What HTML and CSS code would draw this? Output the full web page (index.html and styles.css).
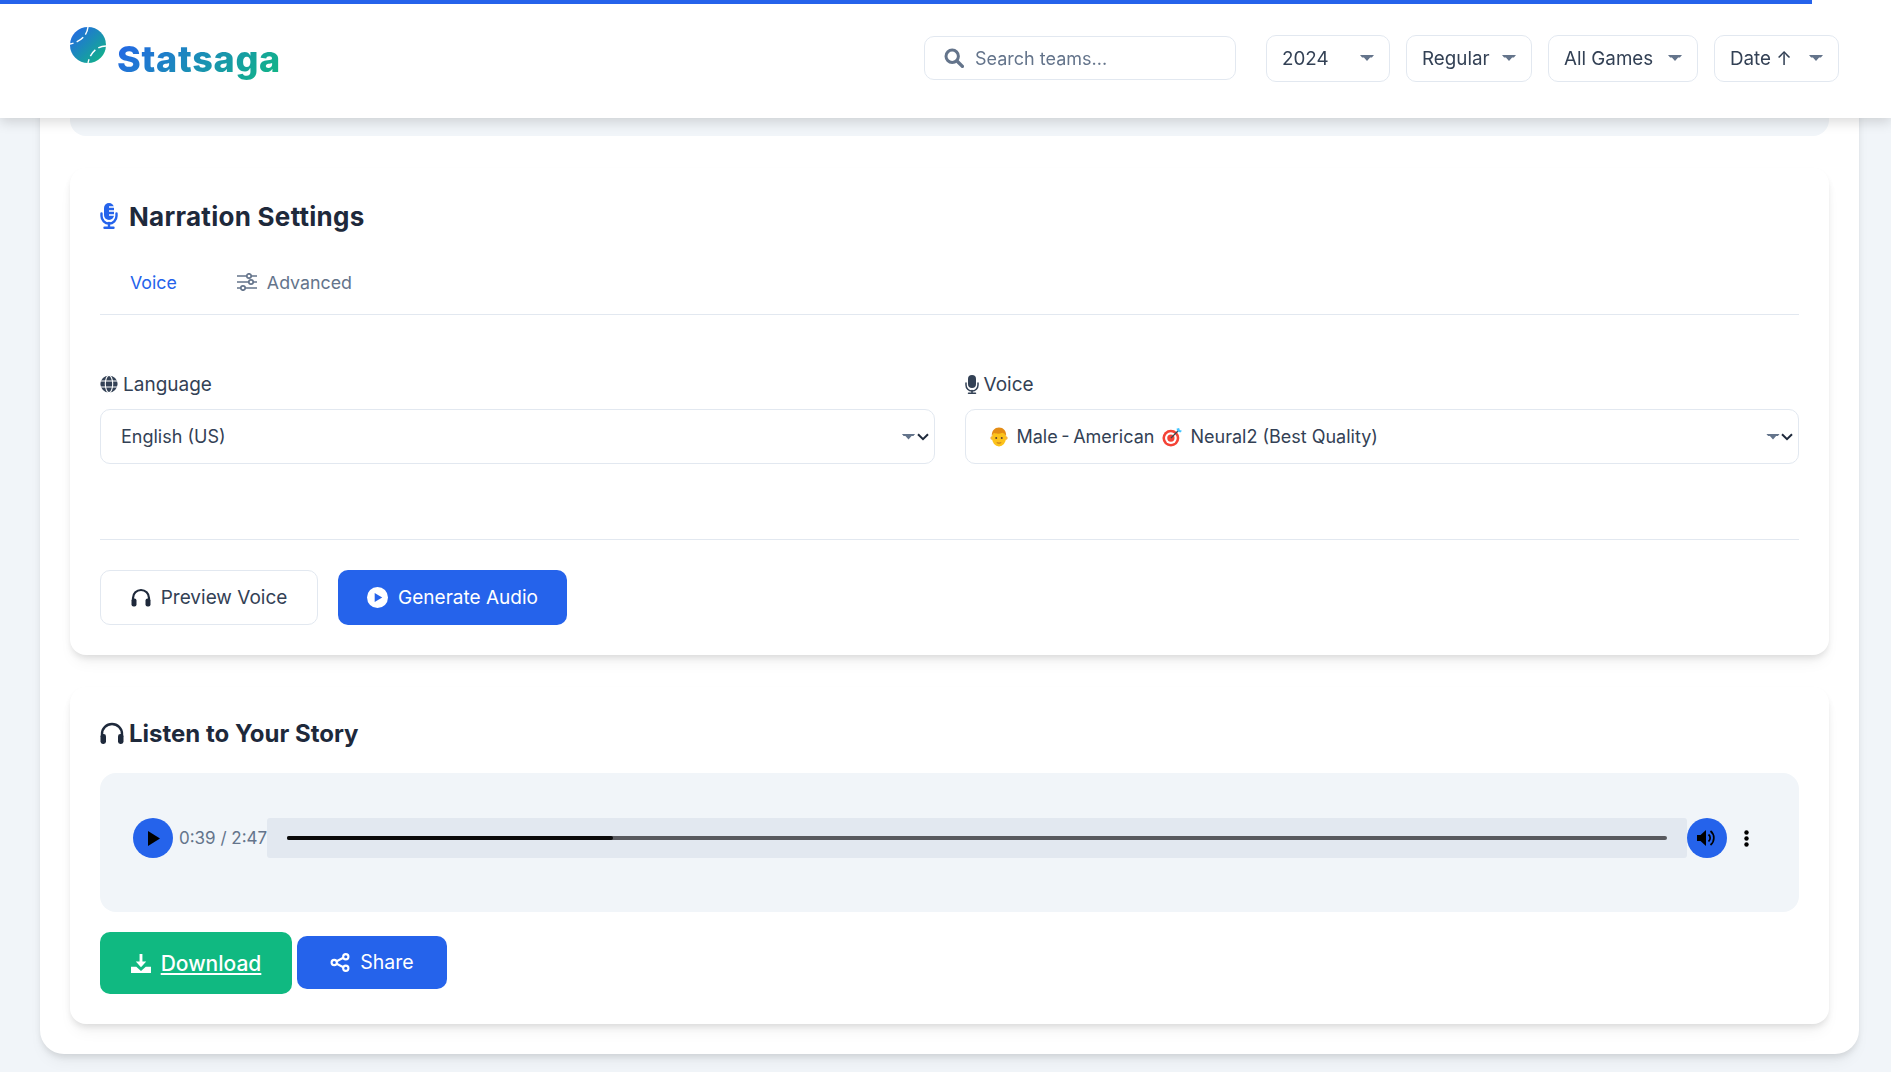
FILE: index.html
```html
<!DOCTYPE html>
<html lang="en">
<head>
    <meta charset="UTF-8">
    <meta name="viewport" content="width=device-width, initial-scale=1.0">
    <title>Statsaga</title>
    <link rel="stylesheet" href="styles.css">
</head>
<body>

<header class="site-header">
    <div class="progress-bar" style="width: 95.8%"></div>
    <div class="header-row">
        <a class="logo">
            <svg class="logo-icon" viewBox="0 0 36 36">
                <defs>
                    <linearGradient id="logo-grad" x1="0" y1="0" x2="1" y2="1">
                        <stop offset="0" stop-color="#2563eb"/>
                        <stop offset="1" stop-color="#10b981"/>
                    </linearGradient>
                </defs>
                <circle cx="18" cy="18" r="18" fill="url(#logo-grad)"/>
                <path d="M18 0C17 9 10 15 0 17" fill="none" stroke="#fff" stroke-width="1.4" stroke-dasharray="8 3.5"/>
                <path d="M36 19C27 19 20 26 18 36" fill="none" stroke="#fff" stroke-width="1.4" stroke-dasharray="8 3.5"/>
            </svg>
            <span class="logo-text">Statsaga</span>
        </a>
        <div class="header-controls">
            <div class="search-box">
                <svg class="search-icon" viewBox="0 0 20 20"><circle cx="8.2" cy="8.2" r="6.2" fill="none" stroke="#64748b" stroke-width="3"/><path d="M13 13l5.4 5.4" stroke="#64748b" stroke-width="3.4" stroke-linecap="round"/></svg>
                <span>Search teams...</span>
            </div>
            <div class="filter filter-year"><span>2024</span><i class="caret"></i></div>
            <div class="filter filter-type"><span>Regular</span><i class="caret"></i></div>
            <div class="filter filter-games"><span>All Games</span><i class="caret"></i></div>
            <div class="filter filter-sort"><span>Date ↑</span><i class="caret"></i></div>
        </div>
    </div>
</header>

<main class="container">
    <section class="card summary-card"></section>

    <section class="card">
        <h2 class="card-title">
            <svg class="title-mic" viewBox="0 0 18 26">
                <rect x="4" y="0" width="10" height="17" rx="5" fill="#2563eb"/>
                <path d="M9 4h5M9 8h5M9 12h5" stroke="#fff" stroke-width="1.5"/>
                <path d="M1.5 10.5v2.5a7.5 7.5 0 0 0 15 0v-2.5" fill="none" stroke="#2563eb" stroke-width="2.4" stroke-linecap="round"/>
                <path d="M9 20v4.5M4.5 24.7h9" stroke="#2563eb" stroke-width="2.4" stroke-linecap="round"/>
            </svg>
            Narration Settings
        </h2>

        <div class="tabs">
            <span class="tab tab-active">Voice</span>
            <span class="tab">
                <svg class="tab-icon" viewBox="0 0 20 18" fill="none" stroke="#64748b" stroke-width="1.7">
                    <path d="M0 3h20M0 9h20M0 15h20"/>
                    <circle cx="12" cy="3" r="2.2" fill="#fff"/>
                    <circle cx="14" cy="9" r="2.2" fill="#fff"/>
                    <circle cx="6" cy="15" r="2.2" fill="#fff"/>
                </svg>
                Advanced
            </span>
        </div>

        <div class="form-grid">
            <div class="form-group">
                <label class="form-label">
                    <svg class="label-icon" viewBox="0 0 18 18">
                        <circle cx="9" cy="9" r="8.6" fill="#334155"/>
                        <g fill="none" stroke="#fff" stroke-width="1.1">
                            <ellipse cx="9" cy="9" rx="3.7" ry="8.6"/>
                            <path d="M0 6h18M0 12h18"/>
                        </g>
                    </svg>
                    Language
                </label>
                <div class="select-box">
                    <span>English (US)</span>
                    <span class="select-arrows"><i class="caret"></i><svg class="chevron" viewBox="0 0 12 8"><path d="M1 1.2l5 5 5-5" fill="none" stroke="#1e293b" stroke-width="2"/></svg></span>
                </div>
            </div>
            <div class="form-group">
                <label class="form-label">
                    <svg class="label-icon-mic" viewBox="0 0 14 19">
                        <rect x="3" y="0" width="8" height="13" rx="4" fill="#334155"/>
                        <path d="M1 8v2a6 6 0 0 0 12 0v-2" fill="none" stroke="#334155" stroke-width="1.5" stroke-linecap="round"/>
                        <path d="M7 15.5v2.7M3.5 18.2h7" stroke="#334155" stroke-width="1.5" stroke-linecap="round"/>
                    </svg>
                    Voice
                </label>
                <div class="select-box">
                    <span class="voice-value">
                        <svg class="emoji emoji-man" viewBox="0 0 18 18">
                            <circle cx="2.8" cy="10" r="1.6" fill="#f5b03e"/>
                            <circle cx="15.2" cy="10" r="1.6" fill="#f5b03e"/>
                            <ellipse cx="9" cy="10" rx="6.3" ry="7.5" fill="#fcc21b"/>
                            <path d="M2.6 9C2 3.5 5 .5 9 .5s7 3 6.4 8.5C15 6.5 13.5 5.5 12 5.2 9.5 6.5 6 6 5 5.5 3.8 6 3 7 2.6 9z" fill="#e48c15"/>
                            <circle cx="6.5" cy="9.8" r=".9" fill="#5d4037"/>
                            <circle cx="11.5" cy="9.8" r=".9" fill="#5d4037"/>
                            <path d="M7 14c1.2.7 2.8.7 4 0" stroke="#b5651d" stroke-width=".8" fill="none"/>
                        </svg>
                        <span class="voice-name">Male - American</span>
                        <svg class="emoji" viewBox="0 0 18 18">
                            <circle cx="8" cy="10" r="7.6" fill="#f44336"/>
                            <circle cx="8" cy="10" r="5.3" fill="#fff"/>
                            <circle cx="8" cy="10" r="3.3" fill="#f44336"/>
                            <path d="M8 10L15 3" stroke="#37474f" stroke-width="1.2"/>
                            <path d="M13 1.5l1 2.4 2.5 1 1.5-1.5-2-.6-.6-2z" fill="#40c4ff"/>
                        </svg>
                        <span>Neural2 (Best Quality)</span>
                    </span>
                    <span class="select-arrows"><i class="caret"></i><svg class="chevron" viewBox="0 0 12 8"><path d="M1 1.2l5 5 5-5" fill="none" stroke="#1e293b" stroke-width="2"/></svg></span>
                </div>
            </div>
        </div>

        <div class="actions">
            <button class="btn btn-outline">
                <svg class="btn-icon" viewBox="0 0 20 19">
                    <path d="M2 13V10a8 8 0 0 1 16 0v3" fill="none" stroke="#1e293b" stroke-width="2.2"/>
                    <rect x="0.5" y="10.5" width="5" height="8" rx="2" fill="#1e293b"/>
                    <rect x="14.5" y="10.5" width="5" height="8" rx="2" fill="#1e293b"/>
                </svg>
                Preview Voice
            </button>
            <button class="btn btn-primary">
                <svg class="btn-icon-play" viewBox="0 0 20 20">
                    <circle cx="10" cy="10" r="10" fill="#fff"/>
                    <path d="M7.3 5.6l7.2 4.4-7.2 4.4z" fill="#2563eb"/>
                </svg>
                Generate Audio
            </button>
        </div>
    </section>

    <section class="card">
        <h2 class="card-title listen-title">
            <svg class="title-phones" viewBox="0 0 24 22">
                <path d="M2 15V12a10 10 0 0 1 20 0v3" fill="none" stroke="#1e293b" stroke-width="2.4"/>
                <rect x="0.5" y="12" width="5.5" height="10" rx="2.4" fill="#1e293b"/>
                <rect x="18" y="12" width="5.5" height="10" rx="2.4" fill="#1e293b"/>
            </svg>
            Listen to Your Story
        </h2>

        <div class="audio-box">
            <div class="player">
                <span class="player-btn">
                    <svg class="play-glyph" viewBox="0 0 12 15"><path d="M0 0l12 7.5-12 7.5z" fill="#000"/></svg>
                </span>
                <span class="player-time">0:39 / 2:47</span>
                <div class="timeline">
                    <div class="track"><div class="track-fill" style="width: 23.6%"></div></div>
                </div>
                <span class="player-btn">
                    <svg class="volume-glyph" viewBox="0 0 20 18">
                        <path d="M0 6h3.5L9 1v16l-5.5-5H0z" fill="#000"/>
                        <path d="M11.5 5.5a4.5 4.5 0 0 1 0 7" fill="none" stroke="#000" stroke-width="1.7"/>
                        <path d="M13.5 2a9 9 0 0 1 0 14" fill="none" stroke="#000" stroke-width="1.7"/>
                    </svg>
                </span>
                <svg class="player-more" viewBox="0 0 5 17"><circle cx="2.5" cy="2.5" r="2.2"/><circle cx="2.5" cy="8.5" r="2.2"/><circle cx="2.5" cy="14.5" r="2.2"/></svg>
            </div>
        </div>

        <div class="share-row">
            <a class="btn btn-download">
                <svg class="btn-icon" viewBox="0 0 21 20" fill="#fff">
                    <path d="M9 0h3v8h4l-5.5 6L5 8h4z"/>
                    <path d="M0 13.5h5.5l5 4.5 5-4.5H21V20H0z"/>
                </svg>
                <span class="download-text">Download</span>
            </a>
            <button class="btn btn-share">
                <svg class="btn-icon" viewBox="0 0 19 18">
                    <path d="M14.5 3.5L4 9l10.5 5.5" fill="none" stroke="#fff" stroke-width="2"/>
                    <circle cx="15" cy="3.5" r="2.5" fill="#2563eb" stroke="#fff" stroke-width="2"/>
                    <circle cx="4" cy="9" r="2.5" fill="#2563eb" stroke="#fff" stroke-width="2"/>
                    <circle cx="15" cy="14.5" r="2.5" fill="#2563eb" stroke="#fff" stroke-width="2"/>
                </svg>
                Share
            </button>
        </div>
    </section>
</main>

</body>
</html>
```

FILE: styles.css
```css
* {
    box-sizing: border-box;
}
html, body {
    height: 100%;
}
body {
    margin: 0;
    font-family: Inter, "Liberation Sans", sans-serif;
    background-color: #f1f5f9;
    color: #334155;
    overflow: hidden;
}

/* header */
.site-header {
    position: fixed;
    top: 0;
    left: 0;
    right: 0;
    height: 118px;
    background: rgba(255, 255, 255, 0.98);
    box-shadow: 0 4px 12px rgba(0, 0, 0, 0.15);
    z-index: 10;
}
.progress-bar {
    height: 4px;
    background-color: #2563eb;
}
.header-row {
    display: flex;
    justify-content: space-between;
    padding: 23px 52px 0 70px;
}
.logo {
    display: flex;
    align-items: flex-start;
    gap: 11px;
}
.logo-icon {
    width: 36px;
    height: 36px;
}
.logo-text {
    margin-top: 9px;
    font-size: 36px;
    line-height: 46px;
    font-weight: 800;
    letter-spacing: 0.7px;
    background: linear-gradient(135deg, #2563eb, #10b981);
    -webkit-background-clip: text;
    background-clip: text;
    color: transparent;
}
.header-controls {
    display: flex;
    align-items: center;
    gap: 16px;
    height: 70px;
    margin-top: -4px;
    font-size: 18.8px;
}
.search-box {
    display: flex;
    align-items: center;
    gap: 11px;
    width: 312px;
    height: 44px;
    padding-left: 19px;
    margin-right: 14px;
    border: 1px solid #e2e8f0;
    border-radius: 10px;
    font-size: 18px;
    color: #64748b;
}
.search-icon {
    width: 20px;
    height: 20px;
}
.filter {
    display: flex;
    align-items: center;
    justify-content: space-between;
    height: 47px;
    padding: 0 15px;
    border: 1px solid #e2e8f0;
    border-radius: 10px;
    color: #334155;
}
.filter-year { width: 124px; }
.filter-type { width: 126px; }
.filter-games { width: 150px; }
.filter-sort { width: 125px; }
.caret {
    display: block;
    width: 14px;
    height: 6px;
    background-color: #64748b;
    clip-path: polygon(0 0, 100% 0, 85% 40%, 72% 40%, 50% 100%, 28% 40%, 15% 40%);
}

/* page */
.container {
    margin: 0 32px 0 40px;
    height: 1054px;
    padding: 36px 30px 0;
    background: #fff;
    border-radius: 0 0 24px 24px;
    box-shadow: 0 4px 6px -1px rgba(0, 0, 0, 0.1), 0 10px 15px -3px rgba(0, 0, 0, 0.05);
}
.card {
    margin-bottom: 32px;
    padding: 30px;
    background: #fff;
    border-radius: 16px;
    box-shadow: 0 4px 6px -1px rgba(0, 0, 0, 0.1), 0 10px 15px -3px rgba(0, 0, 0, 0.05);
}
.summary-card {
    height: 100px;
    padding: 0;
    background-color: #f1f5f9;
    box-shadow: none;
}
.card-title {
    display: flex;
    align-items: center;
    gap: 11px;
    margin: 0;
    height: 36px;
    font-size: 26px;
    font-weight: 700;
    letter-spacing: 0.27px;
    color: #1e293b;
}
.title-mic {
    width: 18px;
    height: 26px;
}

/* tabs */
.tabs {
    display: flex;
    gap: 60px;
    height: 66px;
    margin-top: 15px;
    padding: 15px 30px 0;
    border-bottom: 1px solid #e2e8f0;
    font-size: 17.8px;
    color: #64748b;
}
.tab {
    display: flex;
    align-items: center;
    gap: 10px;
    height: 36px;
}
.tab-active {
    color: #2563eb;
}
.tab-icon {
    width: 20px;
    height: 18px;
}

/* form */
.form-grid {
    display: grid;
    grid-template-columns: 1fr 1fr;
    gap: 30px;
    height: 225px;
    padding-top: 57px;
    border-bottom: 1px solid #e2e8f0;
}
.form-label {
    display: flex;
    align-items: center;
    gap: 5px;
    height: 24px;
    margin-bottom: 13px;
    font-size: 19px;
    font-weight: 400;
}
.label-icon {
    width: 18px;
    height: 18px;
}
.label-icon-mic {
    width: 14px;
    height: 19px;
}
.select-box {
    display: flex;
    align-items: center;
    justify-content: space-between;
    height: 55px;
    padding: 0 5px 0 20px;
    border: 1px solid #e2e8f0;
    border-radius: 10px;
    font-size: 18px;
}
.voice-value {
    display: flex;
    align-items: center;
    gap: 8px;
}
.emoji {
    width: 20px;
    height: 20px;
}
.emoji-man {
    margin-left: 3px;
}
.voice-name {
    word-spacing: -1.5px;
}
.select-arrows {
    display: flex;
    align-items: center;
    gap: 1px;
}
.chevron {
    width: 12px;
    height: 8px;
}

/* buttons */
.actions {
    display: flex;
    gap: 20px;
    margin-top: 30px;
}
.btn {
    display: inline-flex;
    align-items: center;
    justify-content: center;
    gap: 10px;
    border: none;
    border-radius: 10px;
    font-family: inherit;
    font-size: 19px;
}
.btn-icon {
    width: 20px;
    height: 19px;
}
.btn-icon-play {
    width: 21px;
    height: 21px;
}
.btn-outline {
    width: 218px;
    height: 55px;
    background: #fff;
    border: 1px solid #e2e8f0;
    color: #334155;
}
.btn-primary {
    width: 229px;
    height: 55px;
    background-color: #2563eb;
    color: #fff;
}

/* audio */
.listen-title {
    gap: 5px;
    height: 32px;
    font-size: 24px;
    letter-spacing: 0;
}
.title-phones {
    width: 24px;
    height: 22px;
}
.audio-box {
    height: 139px;
    margin-top: 24px;
    padding: 45px 33px 0;
    background-color: #f1f5f9;
    border-radius: 16px;
}
.player {
    display: flex;
    align-items: center;
    height: 40px;
}
.player-btn {
    display: flex;
    align-items: center;
    justify-content: center;
    flex: none;
    width: 40px;
    height: 40px;
    background-color: #2563eb;
    border-radius: 50%;
}
.play-glyph {
    width: 12px;
    height: 15px;
    margin-left: 2px;
}
.volume-glyph {
    width: 20px;
    height: 18px;
}
.player-time {
    flex: none;
    width: 94px;
    padding-left: 6px;
    font-size: 17px;
    color: #64748b;
    white-space: nowrap;
}
.timeline {
    flex: 1;
    display: flex;
    align-items: center;
    height: 40px;
    padding: 0 20px;
    background-color: #e2e8f0;
    border-radius: 3px;
}
.track {
    flex: 1;
    height: 4px;
    background-color: #58595e;
    border-radius: 2px;
}
.track-fill {
    height: 4px;
    background-color: #0a0a0a;
    border-radius: 2px;
}
.player-more {
    width: 5px;
    height: 17px;
    margin-left: 17px;
    margin-right: 17px;
}
.share-row {
    display: flex;
    align-items: center;
    gap: 5px;
    margin-top: 20px;
}
.btn-download {
    width: 192px;
    height: 62px;
    background-color: #10b981;
    color: #fff;
    font-size: 21px;
    font-weight: 500;
}
.download-text {
    text-decoration: underline;
}
.btn-share {
    width: 150px;
    height: 53px;
    margin-bottom: 2px;
    background-color: #2563eb;
    color: #fff;
    font-size: 19.5px;
}
```
